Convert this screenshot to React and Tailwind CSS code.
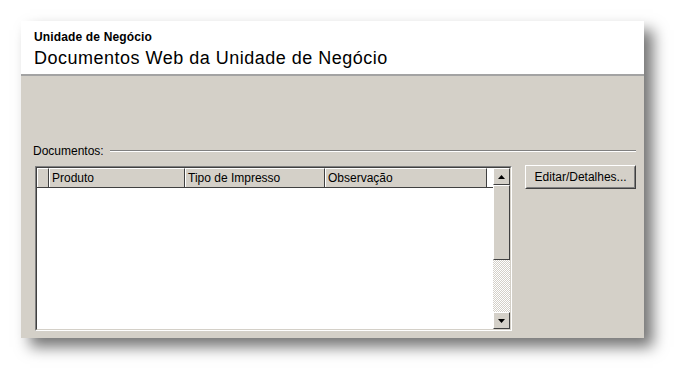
export default function App() {
  const font = { fontFamily: '"Liberation Sans", Arial, sans-serif' };
  return (
    <div className="w-[686px] h-[380px] bg-white pt-[21px] pl-[21px]" style={font}>
      <div className="w-[623px] h-[317px] bg-[#d4d0c8] flex flex-col shadow-[9px_9px_14px_rgba(0,0,0,0.55)]">
        <div className="h-[55px] bg-white border-b-2 border-[#a3a3a3] pl-[13px] pt-[9px] flex flex-col">
          <div className="text-[12px] font-bold leading-[14px] tracking-[0.15px] text-black">Unidade de Negócio</div>
          <div className="text-[18px] leading-[21px] mt-[4px] tracking-[0.5px] text-black">Documentos Web da Unidade de Negócio</div>
        </div>
        <div className="flex-1 pl-[12px] pr-[8px] pt-[68px] flex flex-col">
          <div className="flex items-center gap-[6px] h-[14px]">
            <span className="text-[12px] leading-[14px] text-black">Documentos:</span>
            <div className="flex-1 flex flex-col">
              <div className="h-px bg-[#808080]" />
              <div className="h-px bg-white" />
            </div>
          </div>
          <div className="flex mt-[8px] gap-[13px] items-start">
            <div className="ml-[2px] w-[478px] h-[165px] border border-t-[#808080] border-l-[#808080] border-r-white border-b-white">
              <div className="w-full h-full border border-t-[#404040] border-l-[#404040] border-r-[#d4d0c8] border-b-[#d4d0c8] bg-white flex">
                <div className="flex-1 flex flex-col">
                  <div className="flex h-[20px] bg-[#d4d0c8] border-b border-[#404040] text-[12px] text-black">
                    <div className="w-[12px] border-r border-[#404040] border-t border-l border-t-white border-l-white" />
                    <div className="w-[136px] border-r border-[#404040] border-t border-l border-t-white border-l-white pl-[2px] flex items-center">Produto</div>
                    <div className="w-[140px] border-r border-[#404040] border-t border-l border-t-white border-l-white pl-[2px] flex items-center">Tipo de Impresso</div>
                    <div className="w-[162px] border-r border-[#404040] border-t border-l border-t-white border-l-white pl-[2px] flex items-center">Observação</div>
                    <div className="flex-1 bg-white" />
                  </div>
                  <div className="flex-1 bg-white" />
                </div>
                <div className="w-[17px] flex flex-col bg-[repeating-conic-gradient(#ffffff_0_25%,#d4d0c8_0_50%)] bg-[length:2px_2px]">
                  <div className="h-[17px] bg-[#d4d0c8] border border-t-white border-l-white border-r-[#404040] border-b-[#404040] flex items-center justify-center">
                    <svg width="7" height="4" viewBox="0 0 7 4"><path d="M3.5 0 L7 4 L0 4 Z" fill="#000" /></svg>
                  </div>
                  <div className="h-[75px] bg-[#d4d0c8] border border-t-white border-l-white border-r-[#404040] border-b-[#404040]" />
                  <div className="flex-1" />
                  <div className="h-[17px] bg-[#d4d0c8] border border-t-white border-l-white border-r-[#404040] border-b-[#404040] flex items-center justify-center">
                    <svg width="7" height="4" viewBox="0 0 7 4"><path d="M0 0 L7 0 L3.5 4 Z" fill="#000" /></svg>
                  </div>
                </div>
              </div>
            </div>
            <div className="w-[111px] h-[24px] -mt-[1px] border border-t-white border-l-white border-r-[#404040] border-b-[#404040]">
              <div className="w-full h-full border border-transparent border-r-[#808080] border-b-[#808080] flex items-center justify-center text-[12px] text-black">
                Editar/Detalhes...
              </div>
            </div>
          </div>
        </div>
      </div>
    </div>
  );
}
